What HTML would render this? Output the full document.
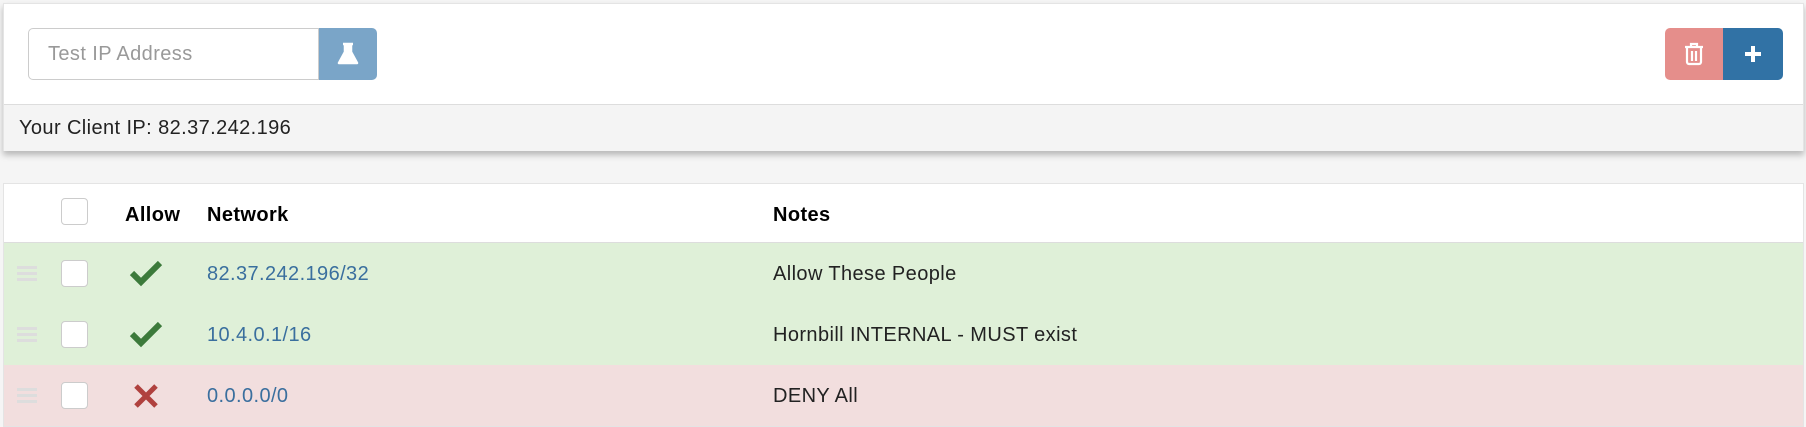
<!DOCTYPE html>
<html><head><style>
body{margin:0;width:1806px;height:427px;background:#f5f5f5;font-family:"Liberation Sans",sans-serif;overflow:hidden;position:relative;letter-spacing:.4px}
.p1{position:absolute;left:3px;top:3px;width:1801px;height:148px;background:#fff;border:1px solid #e4e4e4;box-shadow:0 4px 6px rgba(0,0,0,.25);box-sizing:border-box}
.inp{position:absolute;left:24px;top:24px;width:291px;height:52px;border:1px solid #ccc;border-radius:5px 0 0 5px;box-sizing:border-box;color:#999;font-size:20px;line-height:50px;padding-left:19px}
.flask{position:absolute;left:315px;top:24px;width:58px;height:52px;background:#7aa5c8;border-radius:0 5px 5px 0}
.del{position:absolute;left:1661px;top:24px;width:58px;height:52px;background:#e58e8b;border-radius:5px 0 0 5px}
.add{position:absolute;left:1719px;top:24px;width:60px;height:52px;background:#3172a5;border-radius:0 5px 5px 0}
.foot{position:absolute;left:0;top:100px;width:100%;height:47px;background:#f4f4f4;border-top:1px solid #ddd;font-size:20px;line-height:46px;padding-left:15px;box-sizing:border-box;color:#222}
.p2{position:absolute;left:3px;top:183px;width:1801px;height:244px;background:#fff;border:1px solid #e4e4e4;box-sizing:border-box}
.hd{position:absolute;left:0;top:0;width:100%;height:58px;border-bottom:2px solid #ddd;font-weight:bold;font-size:20px}
.row{position:absolute;left:0;width:100%;height:61px;border-bottom:1px solid #d0dfc9;font-size:20px}
.g{background:#dff0d8}.r{background:#f2dede}
.cb{position:absolute;left:57px;width:25px;height:25px;background:#fff;border:1px solid #ccc;border-radius:4px}
.t{position:absolute;line-height:20px}
.lnk{color:#3a6f9e}
.h{position:absolute;left:13px;width:20px;height:3px;background:#ddd;box-shadow:0 6px 0 #ddd,0 12px 0 #ddd}
</style></head><body>
<div class="p1">
<div class="inp">Test IP Address</div>
<div class="flask"><svg width="58" height="52"><path d="M24 16h10M26 16v8l-6 11h18l-6-11v-8" fill="#fff" stroke="#fff" stroke-width="2.5" stroke-linejoin="round"/></svg></div>
<div class="del"><svg width="58" height="52"><path d="M20 19h18M26 19v-3h6v3M22 20v14a2 2 0 0 0 2 2h10a2 2 0 0 0 2-2V20M27 23v10M31 23v10" fill="none" stroke="#fff" stroke-width="2.2"/></svg></div>
<div class="add"><svg width="60" height="52"><path d="M30 18v16M22 26h16" stroke="#fff" stroke-width="4"/></svg></div>
<div class="foot">Your Client IP: 82.37.242.196</div>
</div>
<div class="p2">
<div class="hd"><div class="cb" style="top:14px"></div><div class="t" style="left:121px;top:21px">Allow</div><div class="t" style="left:203px;top:21px">Network</div><div class="t" style="left:769px;top:21px">Notes</div></div>
<div class="row g" style="top:59px"><div class="h" style="top:23px"></div><div class="cb" style="top:17px"></div><svg class="t" style="left:124px;top:16px" width="36" height="28"><path d="M4 14l9 9L32 4" fill="none" stroke="#3c7a3b" stroke-width="6"/></svg><div class="t lnk" style="left:203px;top:21px">82.37.242.196/32</div><div class="t" style="left:769px;top:21px;color:#222">Allow These People</div></div>
<div class="row g" style="top:120px"><div class="h" style="top:23px"></div><div class="cb" style="top:17px"></div><svg class="t" style="left:124px;top:16px" width="36" height="28"><path d="M4 14l9 9L32 4" fill="none" stroke="#3c7a3b" stroke-width="6"/></svg><div class="t lnk" style="left:203px;top:21px">10.4.0.1/16</div><div class="t" style="left:769px;top:21px;color:#222">Hornbill INTERNAL - MUST exist</div></div>
<div class="row r" style="top:181px;border:none"><div class="h" style="top:23px"></div><div class="cb" style="top:17px"></div><svg class="t" style="left:128px;top:17px" width="28" height="28"><path d="M4 4l20 20M24 4L4 24" stroke="#b0413e" stroke-width="5"/></svg><div class="t lnk" style="left:203px;top:21px">0.0.0.0/0</div><div class="t" style="left:769px;top:21px;color:#222">DENY All</div></div>
</div>
</body></html>
